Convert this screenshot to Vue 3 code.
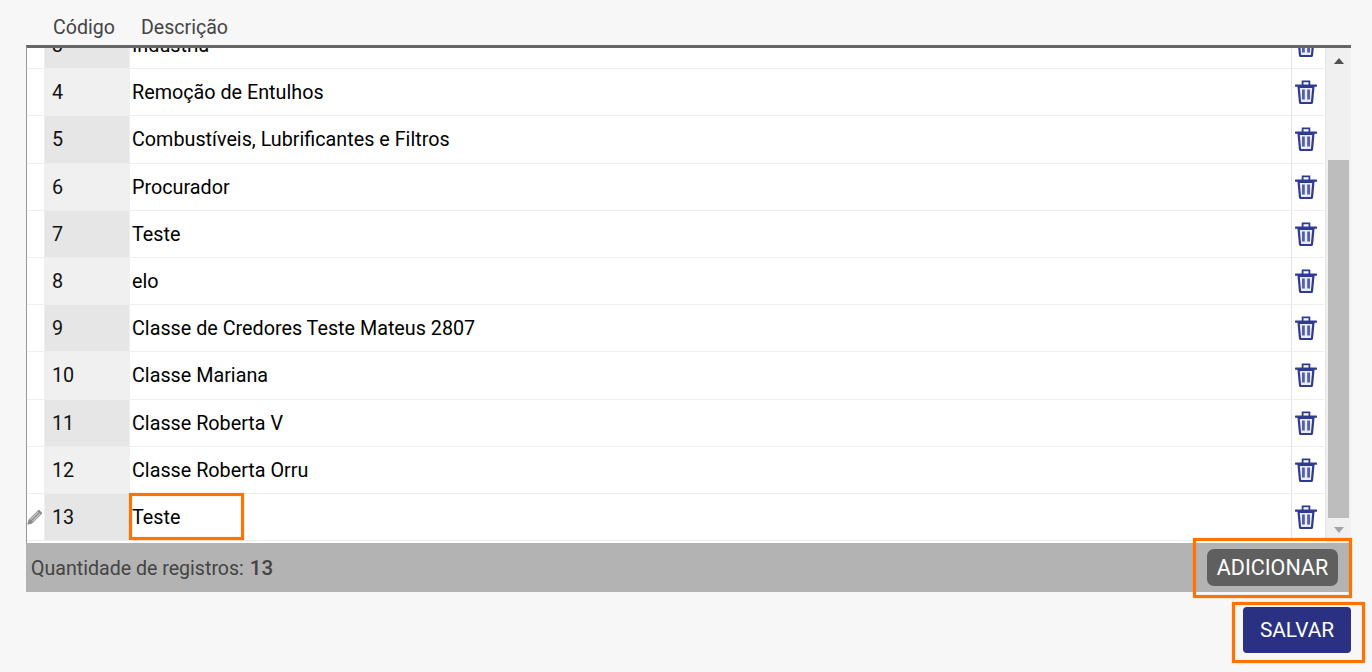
<template>
  <main class="page">
    <section class="grid">
      <div class="head">
        <span>Código</span>
        <span>Descrição</span>
      </div>

      <div class="body">
        <div class="rows">
          <div class="rows-inner">
            <div v-for="(row, i) in rows" :key="row.id" class="row">
              <div class="marker">
                <svg v-if="row.id === 13" class="pencil" viewBox="0 0 16 16">
                  <path d="M11.8 1 15 4.2 5.2 14 .8 15.2 2 10.8Z" fill="#8c8c8c" stroke="#7a7a7a" stroke-width="0.7" stroke-linejoin="round" />
                  <path d="M3.6 10.6 11.4 2.8M5.4 12.4 13.2 4.6" stroke="#cfcfcf" stroke-width="1.1" fill="none" />
                </svg>
              </div>
              <div class="code" :class="{ odd: i % 2 === 1 }">{{ row.id }}</div>
              <div class="desc">{{ row.text }}</div>
              <div class="action">
                <svg class="trash" viewBox="0 0 22 24">
                  <path d="M3.6 7 5 22.2C5.1 22.9 5.6 23.2 6.2 23.2H15.8C16.4 23.2 16.9 22.9 17 22.2L18.4 7Z" fill="#e9ebf6" stroke="#2f3a92" stroke-width="2.2" />
                  <path d="M1 5.6H21" stroke="#2f3a92" stroke-width="2.4" stroke-linecap="round" fill="none" />
                  <path d="M7.6 5V1.4H14.4V5" stroke="#2f3a92" stroke-width="1.8" fill="none" />
                  <path d="M8.4 9.5V19.5M13.6 9.5V19.5" stroke="#5560a8" stroke-width="2.8" fill="none" />
                </svg>
              </div>
            </div>
          </div>
        </div>

        <div class="scrollbar">
          <span class="arrow up"></span>
          <div class="track"><div class="thumb"></div></div>
          <span class="arrow down"></span>
        </div>

        <div class="mark mark-cell"></div>
      </div>

      <div class="foot">
        <span>Quantidade de registros: <b>13</b></span>
        <button class="btn-add">ADICIONAR</button>
        <div class="mark mark-add"></div>
      </div>
    </section>

    <div class="actions">
      <button class="btn-save">SALVAR</button>
      <div class="mark mark-save"></div>
    </div>
  </main>
</template>

<script setup>
const rows = [
  { id: 3, text: 'Indústria' },
  { id: 4, text: 'Remoção de Entulhos' },
  { id: 5, text: 'Combustíveis, Lubrificantes e Filtros' },
  { id: 6, text: 'Procurador' },
  { id: 7, text: 'Teste' },
  { id: 8, text: 'elo' },
  { id: 9, text: 'Classe de Credores Teste Mateus 2807' },
  { id: 10, text: 'Classe Mariana' },
  { id: 11, text: 'Classe Roberta V' },
  { id: 12, text: 'Classe Roberta Orru' },
  { id: 13, text: 'Teste' }
]
</script>

<style>
html,
body {
  margin: 0;
  background: #f7f7f7;
  overflow: hidden;
}
</style>

<style scoped>
* {
  box-sizing: border-box;
}

.page {
  height: 672px;
  padding-left: 26px;
  padding-right: 21px;
  font-family: Roboto, sans-serif;
  color: #000;
}

.head {
  height: 45px;
  padding-top: 17px;
  padding-left: 27px;
  display: flex;
  gap: 26px;
  font-size: 19.6px;
  line-height: 22px;
  color: #444;
}

.body {
  position: relative;
  height: 498px;
  display: flex;
  border-top: 3px solid #666;
  border-left: 1px solid #999;
  background: #fff;
}

.rows {
  flex: 1;
  overflow: hidden;
}

.rows-inner {
  margin-top: -26px;
}

.row {
  height: 47.2px;
  display: flex;
  border-bottom: 1px solid #eee;
  font-size: 19.75px;
  line-height: 47px;
}

.marker {
  width: 18px;
  flex-shrink: 0;
  display: flex;
  align-items: center;
  border-right: 1px solid #efefef;
}

.pencil {
  width: 16px;
  height: 16px;
}

.code {
  width: 85px;
  flex-shrink: 0;
  padding-left: 7px;
  background: #e6e6e6;
  border-right: 1px solid #efefef;
  color: #111;
}

.code.odd {
  background: #f0f0f0;
}

.desc {
  flex: 1;
  padding-left: 2px;
}

.action {
  width: 35px;
  flex-shrink: 0;
  display: flex;
  align-items: center;
  justify-content: center;
  padding-right: 6px;
  border-left: 1px solid #e4e4e4;
  border-right: 1px solid #e4e4e4;
}

.trash {
  width: 22px;
  height: 24px;
  flex-shrink: 0;
}

.scrollbar {
  width: 25px;
  flex-shrink: 0;
  background: #f0f0f0;
  display: flex;
  flex-direction: column;
  align-items: center;
}

.arrow {
  width: 0;
  height: 0;
  border-left: 5.5px solid transparent;
  border-right: 5.5px solid transparent;
}

.arrow.up {
  margin-top: 10px;
  border-bottom: 6px solid #505050;
}

.arrow.down {
  margin-bottom: 10px;
  border-top: 6px solid #a3a3a3;
}

.track {
  flex: 1;
  width: 100%;
  padding: 96px 2px 9px;
}

.thumb {
  height: 100%;
  background: #bdbdbd;
}

.foot {
  position: relative;
  height: 49px;
  display: flex;
  align-items: center;
  justify-content: space-between;
  padding: 0 13px 0 5px;
  background: #b3b3b3;
  font-size: 19.6px;
  color: #444;
}

.foot b {
  font-weight: 500;
  font-size: 20.5px;
  margin-left: 1px;
}

.btn-add {
  width: 131px;
  height: 37px;
  padding: 0;
  border: none;
  border-radius: 7px;
  background: #5f5f5f;
  color: #fff;
  font-family: inherit;
  font-size: 21.5px;
}

.actions {
  position: relative;
  display: flex;
  justify-content: flex-end;
  padding-top: 15px;
}

.btn-save {
  width: 108px;
  height: 46px;
  padding: 0;
  border: none;
  border-radius: 4px;
  background: #2a3182;
  color: #fff;
  font-family: inherit;
  font-size: 20.8px;
}

/* orange annotation boxes laid over the screenshot */
.mark {
  position: absolute;
  border: 3px solid #ff7400;
  box-shadow: 0 0 1px rgba(255, 116, 0, 0.7), inset 0 0 1px rgba(255, 116, 0, 0.7);
  pointer-events: none;
}

.mark-cell {
  left: 102px;
  top: 445px;
  width: 115px;
  height: 47px;
}

.mark-add {
  right: -1px;
  top: -5px;
  width: 159px;
  height: 60px;
}

.mark-save {
  right: -14px;
  top: 10px;
  width: 133px;
  height: 61px;
}
</style>
